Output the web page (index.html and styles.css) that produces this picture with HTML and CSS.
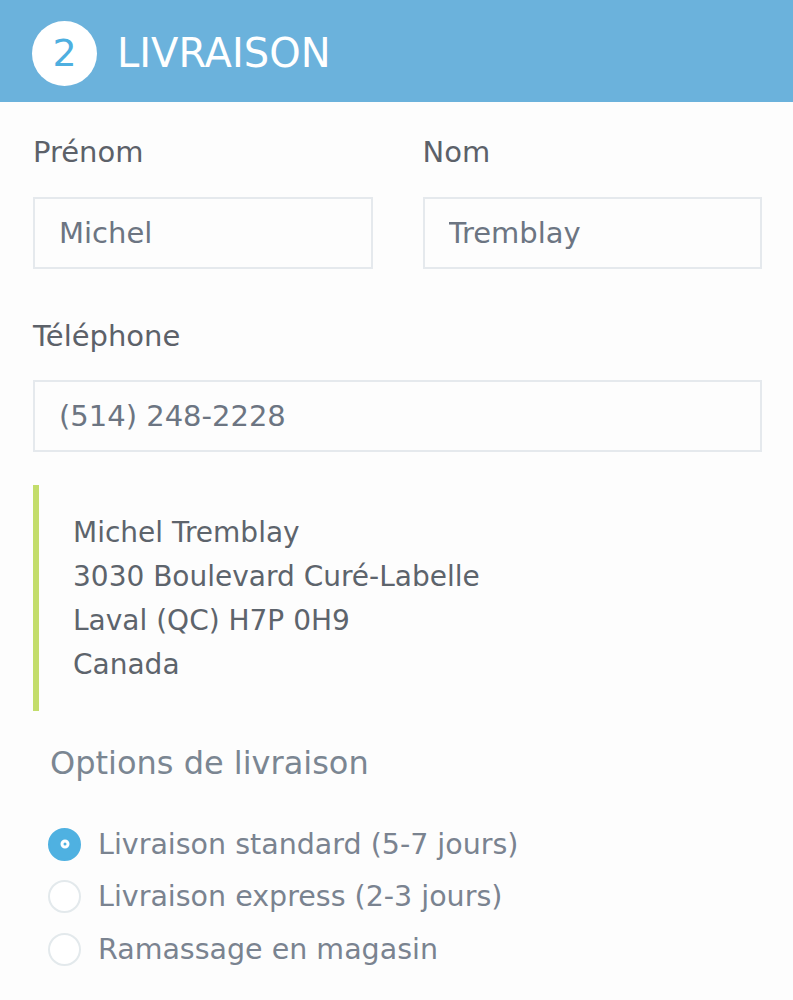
FILE: index.html
```html
<!DOCTYPE html>
<html lang="fr">
<head>
    <meta charset="UTF-8">
    <meta name="viewport" content="width=device-width, initial-scale=1.0">
    <title>Livraison</title>
    <link rel="stylesheet" href="styles.css">
</head>
<body>
    <div class="step-header">
        <span class="step-number">2</span>
        <h2 class="step-title">LIVRAISON</h2>
    </div>

    <form class="shipping-form">
        <div class="field-row">
            <div class="field">
                <label for="prenom">Prénom</label>
                <input id="prenom" type="text" value="Michel">
            </div>
            <div class="field">
                <label for="nom">Nom</label>
                <input id="nom" type="text" value="Tremblay">
            </div>
        </div>
        <div class="field">
            <label for="tel">Téléphone</label>
            <input id="tel" type="tel" value="(514) 248-2228">
        </div>

        <div class="address">
            <div>Michel Tremblay</div>
            <div>3030 Boulevard Curé-Labelle</div>
            <div>Laval (QC) H7P 0H9</div>
            <div>Canada</div>
        </div>

        <div class="options">
            <h3 class="options-title">Options de livraison</h3>
            <label class="option"><input type="radio" name="livraison" checked> Livraison standard (5-7 jours)</label>
            <label class="option"><input type="radio" name="livraison"> Livraison express (2-3 jours)</label>
            <label class="option"><input type="radio" name="livraison"> Ramassage en magasin</label>
        </div>
    </form>
</body>
</html>
```

FILE: styles.css
```css
body { margin: 0; background: #fdfdfd; font-family: "DejaVu Sans", sans-serif; color: #5c6269; }

.step-header {
    display: flex;
    align-items: center;
    box-sizing: border-box;
    height: 102px;
    padding: 4px 0 0 32px;
    background: #6bb2dc;
}
.step-number {
    display: flex;
    align-items: center;
    justify-content: center;
    width: 65px;
    height: 65px;
    border-radius: 50%;
    background: #fff;
    color: #4eafe0;
    font-size: 38px;
    line-height: 1;
}
.step-title { margin: 0 0 0 20px; font-size: 40px; font-weight: normal; line-height: 40px; color: #fff; }

.shipping-form { padding: 32px 31px 0 33px; }
.field-row { display: grid; grid-template-columns: 1fr 1fr; gap: 50px; }
.field { margin-bottom: 49px; }
.field label { display: block; font-size: 29px; line-height: 36px; margin-bottom: 27px; color: #5c6169; }
.field input {
    display: block;
    box-sizing: border-box;
    width: 100%;
    height: 72px;
    padding: 0 0 0 24px;
    border: 2px solid #e5e9ed;
    border-radius: 0;
    background: #fdfdfd;
    font-family: inherit;
    font-size: 29px;
    color: #6c7582;
    outline: none;
}
.field-row + .field label { margin-bottom: 26px; }
.field-row + .field { margin-bottom: 33px; }

.address {
    border-left: 6px solid #c3dd6b;
    padding: 26px 0 24px 34px;
    font-size: 28px;
    line-height: 44px;
    color: #5d646c;
}

.options { padding: 32px 0 0 15px; }
.options-title { margin: 0 0 35px 2px; font-size: 32px; font-weight: normal; line-height: 40px; color: #7b8692; }
.option { display: flex; align-items: center; gap: 17px; height: 52.5px; font-size: 28.5px; color: #7a8390; }
.option input {
    appearance: none;
    position: relative;
    flex: none;
    box-sizing: border-box;
    width: 33px;
    height: 33px;
    margin: 0;
    border: 2px solid #e3e9ec;
    border-radius: 50%;
    background: #fff;
}
.option input:checked { border-color: #4fb1e1; background: #4fb1e1; }
.option input:checked::after {
    content: "";
    position: absolute;
    top: 50%;
    left: 50%;
    width: 3px;
    height: 3px;
    border: 3px solid #fff;
    border-radius: 50%;
    background: #4fb1e1;
    transform: translate(-50%, -50%);
}
```
